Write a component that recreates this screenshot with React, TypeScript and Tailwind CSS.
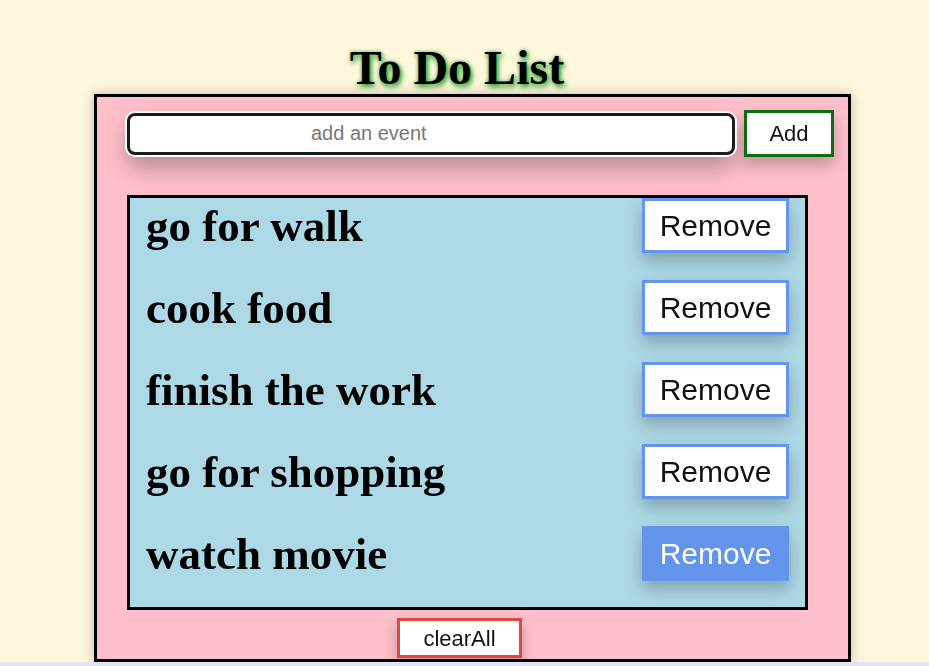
import React from 'react';

const items = ['go for walk', 'cook food', 'finish the work', 'go for shopping', 'watch movie'];

export default function App() {
  const [todos, setTodos] = React.useState<string[]>(items);
  const [value, setValue] = React.useState('');

  return (
    <div className="flex flex-col h-screen overflow-hidden bg-[#fff8dc]">
      {/* title */}
      <h1
        className="pt-[41px] pr-[15px] text-center text-[48px] leading-[53px] font-bold text-black font-['Liberation_Serif',serif]"
        style={{ textShadow: '2px 3px 5px #35a335, 0 0 4px #5cb85c' }}
      >
        To Do List
      </h1>

      {/* main box */}
      <div className="ml-[94px] w-[757px] pb-[1px] flex flex-col border-[3px] border-black bg-[#ffc0cb] shadow-[0_0_12px_rgba(0,0,0,0.25)]">
        <div className="flex items-center gap-[9px] pl-[30px] pt-[13px]">
          <input
            autoFocus
            value={value}
            onChange={(e) => setValue(e.target.value)}
            placeholder="add an event"
            className="w-[608px] h-[42px] pl-[181px] rounded-[8px] border-[3px] border-[#1c1c1c] bg-white text-[20px] text-black placeholder:text-[#777] outline-none shadow-[0_0_0_2px_#ffffff,0_12px_24px_rgba(0,0,0,0.3)] font-['Liberation_Sans',Arial,sans-serif]"
          />
          <button
            onClick={() => {
              if (value.trim()) {
                setTodos([...todos, value.trim()]);
                setValue('');
              }
            }}
            className="w-[90px] h-[47px] border-[3px] border-[#0b6d0b] bg-white text-[22px] text-[#111] shadow-[0_8px_16px_rgba(0,0,0,0.25)] font-['Liberation_Sans',Arial,sans-serif]"
          >
            Add
          </button>
        </div>

        {/* list */}
        <ul className="ml-[30px] mt-[38px] w-[681px] h-[415px] border-[3px] border-black bg-[#add8e6] pl-[16px] pr-[16px]">
          {todos.map((todo, idx) => (
            <li key={idx} className="flex items-center justify-between h-[55px] mb-[27px]">
              <span className="text-[45px] leading-[52px] font-bold text-black font-['Liberation_Serif',serif]">
                {todo}
              </span>
              <button
                onClick={() => setTodos(todos.filter((_, i) => i !== idx))}
                className={`w-[147px] h-[55px] border-[3px] border-[#6495ed] text-[30px] shadow-[0_8px_16px_rgba(0,0,0,0.25)] font-['Liberation_Sans',Arial,sans-serif] ${
                  idx === 4 ? 'bg-[#6495ed] text-white' : 'bg-white text-[#111]'
                }`}
              >
                Remove
              </button>
            </li>
          ))}
        </ul>

        <button
          onClick={() => setTodos([])}
          className="ml-[300px] mt-[8px] w-[125px] h-[40px] border-[3px] border-[#e0483e] bg-white text-[22px] text-[#111] shadow-[0_6px_14px_rgba(0,0,0,0.25)] font-['Liberation_Sans',Arial,sans-serif]"
        >
          clearAll
        </button>
      </div>

      <div className="flex-1 bg-[#dfe5f6]" />
    </div>
  );
}
